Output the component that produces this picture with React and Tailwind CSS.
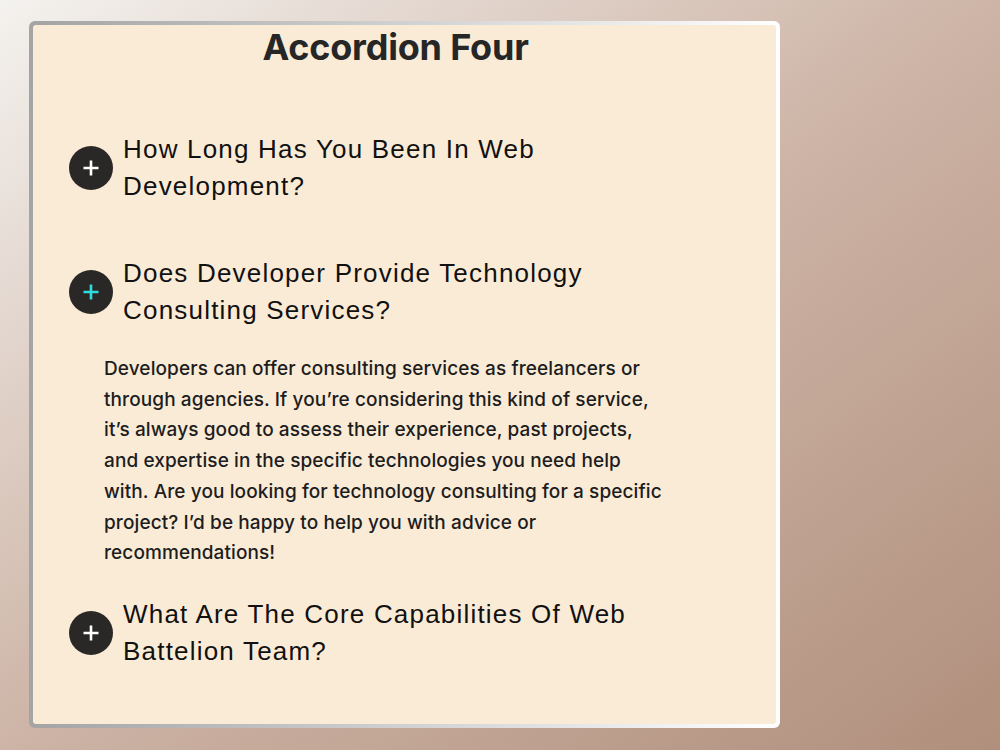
import React, { useState } from 'react';

const items = [
    {
        q: 'How Long Has You Been In Web Development?',
        a: 'I have been building websites and web applications for several years, working on everything from small landing pages to large platforms.',
    },
    {
        q: 'Does Developer Provide Technology Consulting Services?',
        a: 'Developers can offer consulting services as freelancers or through agencies. If you\u2019re considering this kind of service, it\u2019s always good to assess their experience, past projects, and expertise in the specific technologies you need help with. Are you looking for technology consulting for a specific project? I\u2019d be happy to help you with advice or recommendations!',
    },
    {
        q: 'What Are The Core Capabilities Of Web Battelion Team?',
        a: 'The team covers design, front-end and back-end development, deployment and ongoing support.',
    },
];

const PlusIcon = ({ active }) => (
    <svg width="18" height="18" viewBox="0 0 18 18" fill="none">
        <path d="M9 1.5v15M1.5 9h15" stroke={active ? '#2fdcde' : '#ffffff'} strokeWidth="2.6" />
    </svg>
);

const App = () => {
    const [open, setOpen] = useState(1);

    return (
        <div className="min-h-screen w-full bg-gradient-to-br from-[#f4f2ef] via-[#cdb4a6] to-[#b08f7c] pt-[21px] pl-[29px]">
            {/* Card with gradient frame */}
            <div className="w-[751px] h-[707px] rounded-[6px] p-[4px] bg-gradient-to-r from-[#a4a4a4] to-white">
                <div className="h-full w-full rounded-[3px] bg-[#faebd7]">
                    <h1 className="text-center text-[36px] leading-[44px] font-bold text-[#262626] tracking-[-0.2px] pr-[18px]" style={{ fontFamily: 'Inter, sans-serif' }}>
                        Accordion Four
                    </h1>

                    <div className="mt-[62px] pl-[36px] flex flex-col gap-[50px]">
                        {items.map((item, i) => (
                            <div key={i}>
                                <button
                                    onClick={() => setOpen(open === i ? -1 : i)}
                                    className="flex items-center gap-[10px] text-left"
                                >
                                    <span className="w-[44px] h-[44px] shrink-0 rounded-full bg-[#2a2826] flex items-center justify-center">
                                        <PlusIcon active={open === i} />
                                    </span>
                                    <span
                                        className="w-[520px] text-[26px] leading-[37px] text-[#111] tracking-[1.2px]"
                                        style={{ fontFamily: '"Liberation Sans", Arial, sans-serif' }}
                                    >
                                        {item.q}
                                    </span>
                                </button>
                                {open === i && (
                                    <p
                                        className="mt-[25px] mb-[-23px] ml-[35px] w-[566px] text-[19px] leading-[30.7px] font-medium text-[#1d1d1d] tracking-[0.1px]"
                                        style={{ fontFamily: 'Inter, sans-serif' }}
                                    >
                                        {item.a}
                                    </p>
                                )}
                            </div>
                        ))}
                    </div>
                </div>
            </div>
        </div>
    );
};

export default App;
